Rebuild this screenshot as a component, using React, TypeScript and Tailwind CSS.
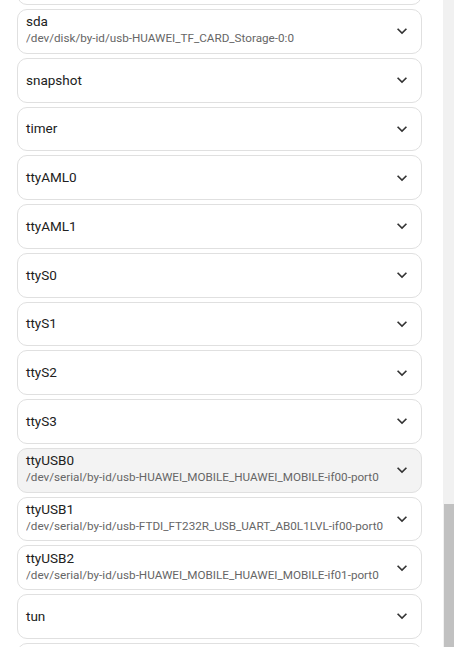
import React from "react";

type Item = { name: string; path?: string; active?: boolean };

const items: Item[] = [
  { name: "" },
  { name: "sda", path: "/dev/disk/by-id/usb-HUAWEI_TF_CARD_Storage-0:0" },
  { name: "snapshot" },
  { name: "timer" },
  { name: "ttyAML0" },
  { name: "ttyAML1" },
  { name: "ttyS0" },
  { name: "ttyS1" },
  { name: "ttyS2" },
  { name: "ttyS3" },
  {
    name: "ttyUSB0",
    path: "/dev/serial/by-id/usb-HUAWEI_MOBILE_HUAWEI_MOBILE-if00-port0",
    active: true,
  },
  {
    name: "ttyUSB1",
    path: "/dev/serial/by-id/usb-FTDI_FT232R_USB_UART_AB0L1LVL-if00-port0",
  },
  {
    name: "ttyUSB2",
    path: "/dev/serial/by-id/usb-HUAWEI_MOBILE_HUAWEI_MOBILE-if01-port0",
  },
  { name: "tun" },
  { name: "" },
];

function Chevron() {
  return (
    <svg width="20" height="20" viewBox="0 0 24 24" className="shrink-0 text-[#333333]">
      <path fill="currentColor" d="M16.59 8.59L12 13.17 7.41 8.59 6 10l6 6 6-6z" />
    </svg>
  );
}

function Card({ item }: { item: Item }) {
  return (
    <div
      className={`flex h-[44.75px] shrink-0 items-center rounded-[10px] border border-[#e0e0e0] pl-[8px] pr-[9px] ${
        item.active ? "bg-[#f3f3f3]" : "bg-white"
      }`}
    >
      <div className={`flex min-w-0 flex-1 flex-col ${item.path ? "pb-[3px]" : ""}`}>
        {item.name && (
          <div className="text-[13.5px] leading-[17px] text-[#212121]">{item.name}</div>
        )}
        {item.path && (
          <div className="truncate text-[11.7px] leading-[16px] text-[#666666]">{item.path}</div>
        )}
      </div>
      <Chevron />
    </div>
  );
}

export default function App() {
  return (
    <div
      className="flex h-[647px] w-[454px] overflow-hidden bg-white"
      style={{ fontFamily: "Roboto, 'Noto Sans', sans-serif" }}
    >
      <div className="flex-1 overflow-hidden pl-[17px] pr-[21px]">
        <div className="-mt-[39.75px] flex flex-col gap-[4px]">
          {items.map((it, i) => (
            <Card key={i} item={it} />
          ))}
        </div>
      </div>
      <div className="flex w-[11px] flex-col bg-[#f1f1f1]">
        <div className="h-[504px]" />
        <div className="ml-[1px] flex-1 bg-[#c1c1c1]" />
      </div>
    </div>
  );
}
